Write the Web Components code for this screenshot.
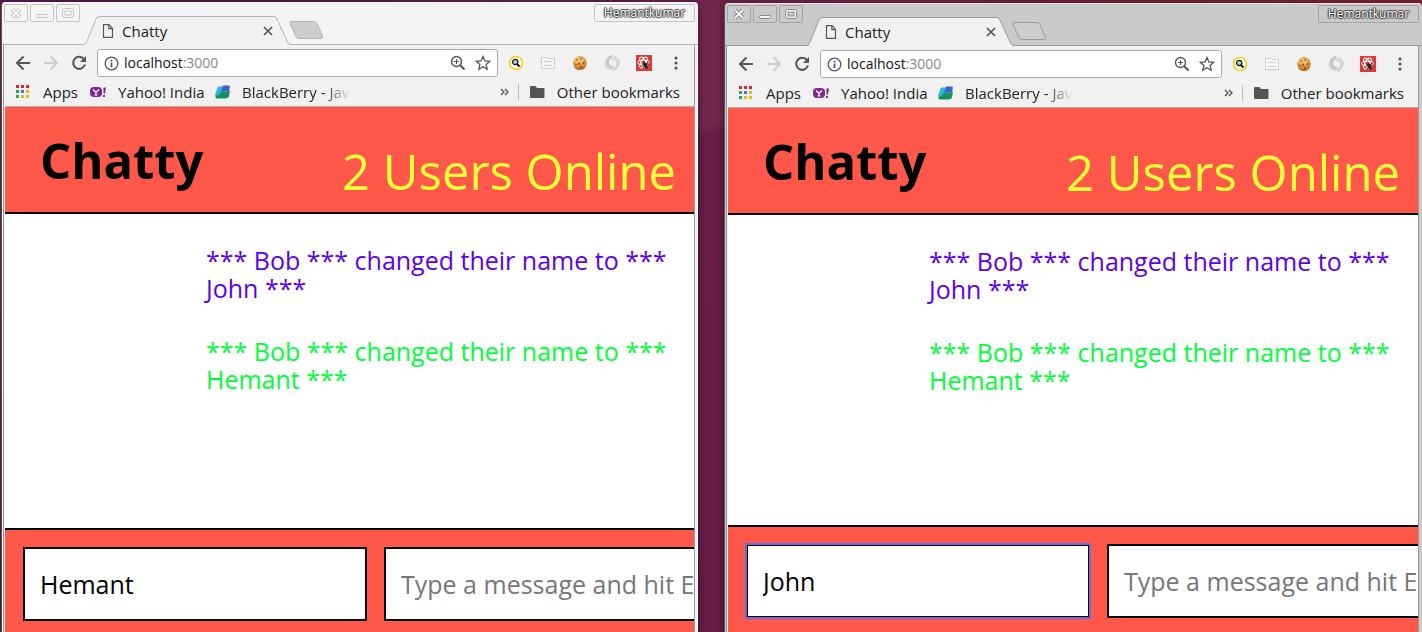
<!DOCTYPE html>
<html lang="en">
<head>
<meta charset="utf-8">
<title>Chatty</title>
<style>
html, body { height: 100%; margin: 0; }
body { overflow: hidden; font-family: "Open Sans", "Noto Sans", sans-serif; }
desk-top { height: 100%; }
</style>
</head>
<body>
<desk-top>
  <browser-window user="Hemantkumar">
    <chat-app users="2" name="Hemant"></chat-app>
  </browser-window>
  <browser-window user="Hemantkumar" active>
    <chat-app users="2" name="John" focused></chat-app>
  </browser-window>
</desk-top>

<script>
const define = (name, render) => customElements.define(name, class extends HTMLElement {
  connectedCallback() {
    if (this.shadowRoot) return;
    this.attachShadow({ mode: 'open' }).innerHTML = render(this);
  }
});

define('desk-top', () => `
<style>
:host { display: grid; grid-template-columns: minmax(0,1fr) minmax(0,1fr); gap: 26px; overflow: hidden;
  background: linear-gradient(90deg, #5f1a55, #74264d 52%, #8a2530) 0 0 / 100% 4px no-repeat, linear-gradient(165deg, #74264c, #74274c 31%, #6b1d47 32%, #661b48); }
::slotted(browser-window:first-child) { margin: 2px 0 0 1px; }
::slotted(browser-window:last-child) { margin-top: 3px; }
</style><slot></slot>`);

define('browser-window', el => `
<style>
:host { --strip: #f4f4f4; --line: #b4b4b4; --btn: #c4c4c4; --glyph: #c4c4c4; --foot: 11px;
  display: flex; flex-direction: column; min-width: 0; box-sizing: border-box; border-radius: 4px 4px 0 0; overflow: hidden;
  background: var(--strip); box-shadow: 0 0 8px rgba(0,0,0,.5); border-left: 1px solid #555; }
:host([active]) { --strip: #cacaca; --line: #999; --btn: #a2a2a2; --glyph: #888; --foot: 14px; }
.frame { flex: 1; display: flex; flex-direction: column; margin: 0 3px 0 1px; border: solid #999; border-width: 0 1px; min-height: 0; background: #f1f1f1; padding: 0 0 0 1px; }
::slotted(chat-app) { flex: 1; }
</style>
<tab-strip user="${el.getAttribute('user')}"></tab-strip>
<div class="frame"><tool-bar></tool-bar><bookmark-bar></bookmark-bar><slot></slot></div>`);

define('tab-strip', el => `
<style>
:host { display: flex; height: 43px; box-shadow: inset 0 1px #fff8; }
.fill { border-bottom: 1px solid var(--line); box-sizing: border-box; }
.controls { display: flex; gap: 2px; padding: 2px 4px 0 2px; }
button { background: none; border: 1px solid var(--btn); border-radius: 2px; padding: 0; width: 24px; height: 18px; display: grid; place-items: center; }
.tab { position: relative; width: 208px; display: flex; align-items: center; height: 43px; box-sizing: border-box; padding: 14px 17px 0 18px; gap: 8px; }
.tab > svg.shape { position: absolute; left: 0; top: 14px; }
.tab span, .tab .doc, .tab .x { position: relative; }
.tab span { flex: 1; font-size: 15px; line-height: 20px; color: #222; }
.tab .x { border: 0; width: 14px; height: 14px; }
.new { border: 0; border-bottom: 1px solid var(--line); border-radius: 0; width: 36px; height: 43px; padding: 14px 0 0; box-sizing: border-box; margin-left: -4px; }
.rest { flex: 1; display: flex; justify-content: flex-end; padding: 2px 3px 0 0; }
.user { height: 18px; width: 101px; box-sizing: border-box; border: 1px solid var(--btn); border-radius: 2px; font-size: 12px; line-height: 16px; text-align: center; color: #fff; text-shadow: 1px 0 1px #333, -1px 0 1px #333, 0 1px 1px #333, 0 -1px 1px #333; }
</style>
<div class="controls fill">
  <button aria-label="Close window"><svg width="12" height="12" viewBox="0 0 12 12"><path d="M2 2l8 8M10 2L2 10" stroke="var(--glyph)" stroke-width="4"/><path d="M2 2l8 8M10 2L2 10" stroke="#f6f6f6" stroke-width="2"/></svg></button>
  <button aria-label="Minimise window"><svg width="12" height="12" viewBox="0 0 12 12"><rect x=".5" y="7.5" width="11" height="3" rx="1" fill="#f6f6f6" stroke="var(--glyph)"/></svg></button>
  <button aria-label="Maximise window"><svg width="12" height="12" viewBox="0 0 12 12"><rect x=".5" y="1.5" width="11" height="9" rx="2" fill="#f6f6f6" stroke="var(--glyph)"/><rect x="3" y="4" width="6" height="4" fill="var(--strip)" stroke="var(--glyph)"/></svg></button>
</div>
<div class="tab">
  <svg class="shape" width="208" height="29" viewBox="0 0 208 29"><path d="M0 28.5C2 28 2.500 26 3 25L12 3Q13 .5 15 .5H190Q192 .5 193 3L203 25Q204 28.500 208 28.500" fill="#f1f1f1" stroke="var(--line)"/><path d="M2 28.500H205" stroke="#f1f1f1" stroke-width="1"/></svg>
  <svg class="doc" width="12" height="14" viewBox="0 0 12 14"><path d="M1.500 .7H7L10.500 4.500V13.300H1.500ZM6.800 .7V4.700H10.500" fill="none" stroke="#555" stroke-width="1.200"/></svg>
  <span>Chatty</span>
  <button class="x" aria-label="Close tab"><svg width="10" height="10" viewBox="0 0 10 10"><path d="M1 1l8 8M9 1L1 9" stroke="#555" stroke-width="1.700"/></svg></button>
</div>
<button class="new" aria-label="New tab"><svg width="36" height="18" viewBox="0 0 36 18"><path d="M3.500 .5H26Q28 .5 29 2.500L34.500 15Q35 17.500 33 17.500H11Q9 17.500 8 15.500L2 2.500Q1.500 .5 3.500 .5Z" fill="#cdcdcd" stroke="var(--line)"/></svg></button>
<div class="rest fill"><div class="user">${el.getAttribute('user')}</div></div>`);

define('tool-bar', () => `
<style>
:host { display: flex; align-items: center; height: 36px; padding: 0 8px; }
button { border: 0; background: none; padding: 0; width: 20px; height: 20px; display: grid; place-items: center; flex: none; }
nav { display: flex; gap: 8px; margin-right: 8px; }
.box { flex: 1; min-width: 0; display: flex; align-items: center; height: 28px; box-sizing: border-box; border: 1px solid #aaa; border-radius: 3px; background: #fff; padding: 0 4px 0 6px; gap: 5px; }
.url { flex: 1; min-width: 0; font-size: 14px; line-height: 20px; color: #111; }
.url i { font-style: normal; color: #888; }
.ext { display: flex; gap: 12px; padding-left: 8px; }
</style>
<nav>
<button aria-label="Back"><svg width="16" height="16" viewBox="0 0 16 16"><path d="M15 8H2M8.500 1.500L2 8l6.500 6.500" fill="none" stroke="#555" stroke-width="2"/></svg></button>
<button aria-label="Forward"><svg width="16" height="16" viewBox="0 0 16 16"><path d="M1 8H14M7.500 1.500L14 8l-6.500 6.500" fill="none" stroke="#ccc" stroke-width="2"/></svg></button>
<button aria-label="Reload"><svg width="16" height="16" viewBox="0 0 16 16"><path d="M13 4.200A6 6 0 1 0 14 9.500" fill="none" stroke="#555" stroke-width="2"/><path d="M15 1V7H9Z" fill="#555"/></svg></button>
</nav>
<div class="box">
<svg width="15" height="15" viewBox="0 0 15 15"><circle cx="7.500" cy="7.500" r="6.300" fill="none" stroke="#555" stroke-width="1.300"/><path d="M7.500 6.500V11.300M7.500 3.800V5.400" stroke="#555" stroke-width="1.700"/></svg>
<span class="url">localhost<i>:3000</i></span>
<button aria-label="Zoom"><svg width="16" height="16" viewBox="0 0 16 16"><circle cx="6.500" cy="6.500" r="5" fill="none" stroke="#555" stroke-width="1.400"/><path d="M4 6.500H9M6.500 4V9" stroke="#555"/><path d="M10.200 10.200L14.500 14.500" stroke="#555" stroke-width="2"/></svg></button>
<button aria-label="Bookmark this page"><svg width="16" height="16" viewBox="0 0 16 16"><path d="M8 1.500l1.900 4.400 4.800.4-3.600 3.200 1.100 4.700L8 11.700l-4.200 2.500 1.100-4.700L1.300 6.300l4.800-.4z" fill="none" stroke="#555" stroke-width="1.300"/></svg></button>
</div>
<div class="ext">
<button aria-label="Search extension"><svg width="16" height="16" viewBox="0 0 16 16"><circle cx="8" cy="8" r="6.500" fill="#fff" stroke="#f7ce27" stroke-width="1.700"/><circle cx="7.200" cy="7" r="2.600" fill="#bcc" stroke="#111" stroke-width="1.200"/><path d="M9 9l2.500 2.500" stroke="#111" stroke-width="1.800"/></svg></button>
<button aria-label="Window extension"><svg width="16" height="16" viewBox="0 0 16 16"><path d="M1.500 2.500H7l1 1h6.500V13.500H1.500Z" fill="#fafafa" stroke="#ccc"/><path d="M4 6.500H12M4 10.500H12" stroke="#d4d4d4" stroke-width="1.500"/></svg></button>
<button aria-label="Cookie extension"><svg width="16" height="16" viewBox="0 0 16 16"><path d="M8 1l3 .7 3 3 1 3.300q-1 7-7 7T1 8Q2 2 8 1" fill="#dc9340"/><path d="M2 11q6 4 12-1-1 5-6 5t-6-4" fill="#b96f24"/><ellipse cx="7" cy="5.500" rx="5" ry="3.500" fill="#f0bb6c"/><g fill="#7c4517"><circle cx="5" cy="5" r=".8"/><circle cx="9" cy="4" r=".8"/><circle cx="11.500" cy="8" r=".9"/><circle cx="7" cy="8.500" r="1"/><circle cx="4" cy="9.500" r=".8"/><circle cx="9" cy="12" r=".9"/></g></svg></button>
<button aria-label="Swirl extension"><svg width="16" height="16" viewBox="0 0 16 16" fill="none"><path d="M7 1.500C1 3 0 10 3 12.500C5 14.500 8 14.500 10 13" stroke="#d8d8d8" stroke-width="1.500"/><path d="M8.500 1.500C3 2 2.500 8 4.500 10.500S9 12.500 9.500 11.500" stroke="#c6c6c6" stroke-width="3"/><path d="M8.500 14.500C14 13.500 14.500 8 12.500 5.500S8.500 3.500 7.500 4.500" stroke="#dadada" stroke-width="3"/><path d="M9 14.800C15 13 16.500 7 13.500 3.500C12.500 2 11 1.500 10 1.500" stroke="#c4c4c4"/></svg></button>
<button aria-label="React extension"><svg width="16" height="16" viewBox="0 0 16 16"><path fill="#d93a3a" d="M0 0h16v16H0z"/><g fill="none" stroke="#fff"><ellipse cx="7.500" cy="7.500" rx="6" ry="2.500"/><ellipse cx="7.500" cy="7.500" rx="6" ry="2.500" transform="rotate(60 7.500 7.500)"/><ellipse cx="7.500" cy="7.500" rx="6" ry="2.500" transform="rotate(120 7.500 7.500)"/></g><ellipse cx="9.500" cy="10.500" rx="1.900" ry="3.500" fill="#222" transform="rotate(-25 9.500 10.500)"/><path d="M6 10l7-1M7 13l5-6" stroke="#222" stroke-width=".8"/></svg></button>
<button aria-label="Menu"><svg width="16" height="16" viewBox="0 0 16 16" fill="#555"><circle cx="8" cy="3" r="1.600"/><circle cx="8" cy="8" r="1.600"/><circle cx="8" cy="13" r="1.600"/></svg></button>
</div>`);

define('bookmark-bar', () => `
<style>
:host { display: flex; align-items: center; height: 26px; border-bottom: 1px solid #b0b0b0; padding: 0 14px 4px 10px; box-sizing: border-box; font-size: 15px; line-height: 20px; white-space: nowrap; }
a { color: #222; text-decoration: none; display: flex; align-items: center; }
svg { flex: none; }
.apps { gap: 13px; width: 75px; } .yahoo { gap: 11px; width: 124px; }
.bb { gap: 11px; width: 136px; overflow: hidden; mask: linear-gradient(90deg,#000 80%,transparent); }
.other { gap: 12px; border-left: 1px solid #bbb; padding-left: 11px; margin-left: 9px; height: 16px; }
.sp { flex: 1; }
button { border: 0; background: none; padding: 0; display: grid; }
</style>
<a class="apps" href="#apps"><svg width="15" height="14" viewBox="0 0 15 14"><path fill="#ea1c3c" d="M1 0h3v3H1zM6 0h3v3H6zM11 0h3v3h-3z"/><path fill="#27a35a" d="M1 5h3v3H1zM1 10h3v3H1z"/><path fill="#4276e8" d="M6 5h3v3H6z"/><path fill="#f0b323" d="M11 5h3v3h-3zM6 10h3v3H6zM11 10h3v3h-3z"/></svg>Apps</a>
<a class="yahoo" href="#yahoo"><svg width="17" height="14" viewBox="0 0 17 14"><rect x="0" y="2" width="12" height="10" rx="4" fill="#7b2a92"/><path d="M3 4.500l3 3L9 4.500M6 7v3.500M4.500 10h3" fill="none" stroke="#fff" stroke-width="1.200"/><path d="M13.500 2.500h2.500L15 8.500h-1.500zM13 10h2v2h-2z" fill="#7b2a92"/></svg>Yahoo! India</a>
<a class="bb" href="#blackberry"><svg width="17" height="16" viewBox="0 0 17 16"><path d="M3.500 3.500Q4 2.500 5 2.500H11L9 10Q6 12 1 11Z" fill="#30b6d8"/><path d="M9 1.500H15Q16 1.500 15.800 3L15 7.500H7Z" fill="#3763cf"/><path d="M6 9Q8 7 11 7.500T16 6.500L15 12Q14.500 14.500 11 14.500H3Q1 14 1.500 11Q4 12 6 9Z" fill="#15905f"/></svg>BlackBerry - Java</a>
<span class="sp"></span>
<button aria-label="More bookmarks"><svg width="9" height="8" viewBox="0 0 9 8"><path d="M1 1l3 3-3 3M5 1l3 3-3 3" fill="none" stroke="#555" stroke-width="1.400"/></svg></button>
<a class="other" href="#other"><svg width="15" height="12" viewBox="0 0 15 12"><path d="M1 0H5.500L7 2H13.500Q14.500 2 14.500 3V11Q14.500 12 13.500 12H1Q0 12 0 11V1Q0 0 1 0" fill="#555"/></svg>Other bookmarks</a>`);

define('chat-app', el => `
<style>
:host { display: flex; flex-direction: column; min-height: 0; min-width: 0; overflow: hidden; background: #fff; }
header { display: flex; justify-content: space-between; align-items: flex-start; height: 105px; flex: none; padding: 0 18px 0 35px; background: #ff574a; border-bottom: 2px solid #000; }
h1, p { font-size: 49px; line-height: 68px; white-space: nowrap; }
h1 { margin: 19px 0 0; color: #000; }
p { margin: 30px 0 0; color: #fbff3a; }
main { flex: 1; min-height: 0; overflow: hidden; padding: 32px 20px 0 201px; display: flex; flex-direction: column; gap: 35px; }
footer { flex: none; display: flex; gap: 17px; padding: 17px 0 var(--foot) 18px; background: #ff574a; border-top: 2px solid #000; }
input { flex: none; box-sizing: border-box; height: 74px; width: 344px; border: 2px solid #000; border-radius: 0; padding: 0 15px; background: #fff; font: 25px/34px "Open Sans", sans-serif; color: #000; outline: 0; }
input.msg { width: 900px; }
input::placeholder { color: #777; }
:host([focused]) input.name { outline: 2px solid #6a6ae6; outline-offset: -1px; }
</style>
<header><h1>Chatty</h1><p>${el.getAttribute('users')} Users Online</p></header>
<main>
<chat-notice style="color:#5a00f5" to="John"></chat-notice>
<chat-notice style="color:#00ff37" to="Hemant"></chat-notice>
</main>
<footer><input class="name" aria-label="Your name" value="${el.getAttribute('name')}"><input class="msg" aria-label="Message" placeholder="Type a message and hit ENTER"></footer>`);

define('chat-notice', el => `
<style>:host { display: block; font-size: 25px; line-height: 28px; }</style>*** Bob *** changed their name to *** ${el.getAttribute('to')} ***`);
</script>
</body>
</html>
